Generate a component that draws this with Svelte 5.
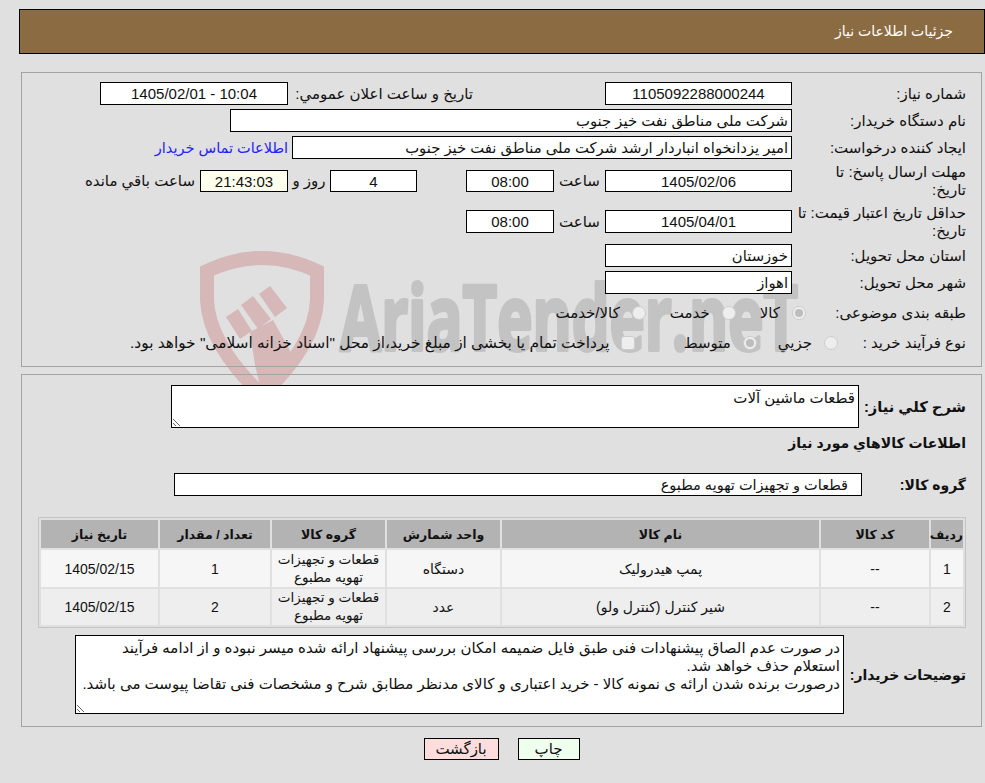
<script>
    const items = [
        { no: 1, code: '--', name: 'پمپ هیدرولیک', unit: 'دستگاه', qty: 1, date: '1405/02/15' },
        { no: 2, code: '--', name: 'شیر کنترل (کنترل ولو)', unit: 'عدد', qty: 2, date: '1405/02/15' }
    ];
    const group = 'قطعات و تجهیزات تهویه مطبوع';
    const notes = 'در صورت عدم الصاق پیشنهادات فنی طبق فایل ضمیمه امکان بررسی پیشنهاد ارائه شده میسر نبوده و از ادامه فرآیند استعلام حذف خواهد شد.\nدرصورت برنده شدن ارائه ی نمونه کالا - خرید اعتباری و کالای مدنظر مطابق شرح و مشخصات فنی تقاضا پیوست می باشد.';
</script>

<div class="page" dir="rtl">
    <svg class="watermark" width="985" height="420" viewBox="0 0 985 420" aria-hidden="true">
        <path class="shield" d="M207 271 Q262 245 317 271 L317 300 Q315 345 262 395 Q209 345 207 300 Z" />
        <polygon class="gavel" points="259,294 270,286 287,308 275,317" />
        <polygon class="gavel" points="241,305 253,296 271,319 258,329" />
        <polygon class="gavel" points="226,317 238,309 252,331 240,339" />
        <polygon class="gavel" points="250,332 273,320 298,365 262,395 255,365" />
        <text class="brand" x="340" y="350" textLength="458" lengthAdjust="spacingAndGlyphs">AriaTender.neT</text>
    </svg>

    <header class="title">جزئیات اطلاعات نیاز</header>

    <section class="panel first">
        <div class="row">
            <div class="label">شماره نیاز:</div>
            <input class="box w187" readonly value="1105092288000244" />
            <span class="pub-label">تاریخ و ساعت اعلان عمومي:</span>
            <input class="box w188" readonly value="10:04 - 1405/02/01" />
        </div>
        <div class="row">
            <div class="label">نام دستگاه خریدار:</div>
            <input class="box start w562" readonly value="شرکت ملی مناطق نفت خیز جنوب" />
        </div>
        <div class="row">
            <div class="label">ایجاد کننده درخواست:</div>
            <input class="box start w500" readonly value="امیر یزدانخواه انباردار ارشد شرکت ملی مناطق نفت خیز جنوب" />
            <span class="link">اطلاعات تماس خریدار</span>
        </div>
        <div class="row tall">
            <div class="label">مهلت ارسال پاسخ: تا<br />تاریخ:</div>
            <input class="box w187 short" readonly value="1405/02/06" />
            <span class="hour">ساعت</span>
            <input class="box w88 short" readonly value="08:00" />
            <input class="box w87 short days" readonly value="4" />
            <span class="day-text">روز و</span>
            <input class="box w88 short clock" readonly value="21:43:03" />
            <span class="left-text">ساعت باقي مانده</span>
        </div>
        <div class="row tall">
            <div class="label">حداقل تاریخ اعتبار قیمت: تا<br />تاریخ:</div>
            <input class="box w187" readonly value="1405/04/01" />
            <span class="hour">ساعت</span>
            <input class="box w88" readonly value="08:00" />
        </div>
        <div class="row">
            <div class="label">استان محل تحویل:</div>
            <input class="box start w187" readonly value="خوزستان" />
        </div>
        <div class="row">
            <div class="label">شهر محل تحویل:</div>
            <input class="box start w187" readonly value="اهواز" />
        </div>
        <div class="row choice">
            <div class="label short-label">طبقه بندی موضوعی:</div>
            <div class="options subject">
                <label><input type="radio" name="subject" disabled checked />کالا</label>
                <label><input type="radio" name="subject" disabled />خدمت</label>
                <label><input type="radio" name="subject" disabled />کالا/خدمت</label>
            </div>
        </div>
        <div class="row choice">
            <div class="label short-label">نوع فرآیند خرید :</div>
            <div class="options process">
                <label><input type="radio" name="process" disabled />جزیي</label>
                <label><input type="radio" name="process" disabled checked />متوسط</label>
                <label class="treasury"><input type="checkbox" disabled />پرداخت تمام یا بخشی از مبلغ خرید،از محل "اسناد خزانه اسلامی" خواهد بود.</label>
            </div>
        </div>
    </section>

    <section class="panel second">
        <div class="row desc">
            <div class="label bold">شرح کلي نیاز:</div>
            <textarea class="summary" readonly>قطعات ماشین آلات</textarea>
        </div>
        <h3>اطلاعات کالاهاي مورد نیاز</h3>
        <div class="row goods">
            <div class="label bold">گروه کالا:</div>
            <input class="box group" readonly value={group} />
        </div>

        <table>
            <thead>
                <tr>
                    <th class="c-no">ردیف</th>
                    <th class="c-code">کد کالا</th>
                    <th class="c-name">نام کالا</th>
                    <th class="c-unit">واحد شمارش</th>
                    <th class="c-group">گروه کالا</th>
                    <th class="c-qty">تعداد / مقدار</th>
                    <th class="c-date">تاریخ نیاز</th>
                </tr>
            </thead>
            <tbody>
                {#each items as item}
                    <tr>
                        <td>{item.no}</td>
                        <td>{item.code}</td>
                        <td>{item.name}</td>
                        <td>{item.unit}</td>
                        <td class="two-line">قطعات و تجهیزات<br />تهویه مطبوع</td>
                        <td>{item.qty}</td>
                        <td>{item.date}</td>
                    </tr>
                {/each}
            </tbody>
        </table>

        <div class="row buyer">
            <div class="label bold">توضیحات خریدار:</div>
            <textarea class="notes" readonly value={notes}></textarea>
        </div>
    </section>

    <div class="actions">
        <button class="back">بازگشت</button>
        <button class="print">چاپ</button>
    </div>
</div>

<style>
    :global(body) {
        background: #e0e0e0;
    }

    .page {
        position: relative;
        padding-top: 9px;
        height: 774px;
        overflow: hidden;
        font-family: "Liberation Sans", "DejaVu Sans", sans-serif;
        font-size: 15px;
        color: #111;
    }

    .watermark {
        position: absolute;
        top: 0;
        left: 0;
        z-index: -1;
        direction: ltr;
        pointer-events: none;
    }
    .shield {
        fill: none;
        stroke: #d6b8b9;
        stroke-width: 14;
    }
    .gavel {
        fill: #d6b8b9;
    }
    .brand {
        font-family: "Open Sans", sans-serif;
        font-weight: 700;
        font-size: 90px;
        fill: #c3c3c3;
        stroke: #c3c3c3;
        stroke-width: 4;
        stroke-linejoin: round;
    }

    .title {
        box-sizing: border-box;
        height: 45px;
        margin-left: 19px;
        padding-right: 31px;
        line-height: 43px;
        font-size: 14px;
        background: #8b6b41;
        border: 1px solid #000;
        color: #fff;
    }

    .panel {
        box-sizing: border-box;
        margin: 18px 3px 0 21px;
        padding: 9px 15px 0 0;
        border: 1px solid #a3a3a3;
        height: 295px;
    }
    .second {
        margin-top: 7px;
        padding-top: 10px;
        height: 353px;
    }

    .row {
        display: flex;
        align-items: center;
        min-height: 23px;
        margin-bottom: 4px;
    }
    .row.tall {
        height: 36px;
    }
    .row.tall + .row.tall {
        height: 37px;
    }
    .row.choice {
        height: 30px;
        margin-bottom: 0;
    }

    .label {
        flex: 0 0 174px;
        min-width: 0;
        line-height: 18px;
        white-space: nowrap;
    }
    .short-label {
        flex-basis: 128px;
    }
    .bold, h3 {
        font-weight: 700;
        font-size: 14px;
    }

    .box {
        box-sizing: border-box;
        height: 23px;
        padding: 0 3px;
        border: 1px solid #000;
        background: #fff;
        font: inherit;
        color: inherit;
        text-align: center;
        outline: none;
    }
    .box.start {
        text-align: right;
        font-size: 14.8px;
    }
    .box.short {
        height: 22px;
    }
    .w187 { width: 187px; }
    .w188 { width: 188px; }
    .w562 { width: 562px; }
    .w500 { width: 500px; }
    .w88 { width: 88px; }
    .w87 { width: 87px; }

    .pub-label {
        width: 185px;
        margin-right: 132px;
        white-space: nowrap;
    }
    .link {
        margin-right: 4px;
        font-size: 14.5px;
        color: #2222ff;
        white-space: nowrap;
    }
    .hour {
        width: 51px;
        text-align: center;
    }
    .days {
        margin-right: 49px;
    }
    .day-text {
        width: 42px;
        text-align: center;
    }
    .clock {
        background: #ffffee;
    }
    .left-text {
        margin-right: 5px;
        white-space: nowrap;
    }

    .options {
        display: flex;
        align-items: center;
        white-space: nowrap;
    }
    .options label {
        display: flex;
        align-items: center;
    }
    .options input {
        appearance: none;
        box-sizing: border-box;
        width: 14px;
        height: 14px;
        margin: 0 0 0 12px;
        border: 1px solid #cdcdcd;
        border-radius: 50%;
        background: #eee;
        display: grid;
        place-items: center;
    }
    .options input:checked::before {
        content: "";
        width: 8px;
        height: 8px;
        border-radius: 50%;
        background: #bdbdbd;
    }
    .options input[type="checkbox"] {
        border-radius: 3px;
    }
    .subject {
        gap: 24px;
        margin-right: 32px;
    }
    .process {
        gap: 21px;
    }
    .process .treasury {
        margin-right: 28px;
        font-size: 15.4px;
    }
    .process .treasury input {
        margin-left: 11px;
    }

    .desc {
        margin-bottom: 0;
    }
    .desc .label {
        flex-basis: 107px;
        font-size: 14.7px;
    }
    textarea {
        box-sizing: border-box;
        display: block;
        padding: 3px 3px;
        border: 1px solid #000;
        background: #fff;
        font: inherit;
        color: inherit;
        line-height: 18px;
        outline: none;
    }
    .summary {
        width: 688px;
        height: 43px;
    }
    h3 {
        margin: 6px 0 0;
        line-height: 18px;
    }
    .goods {
        margin: 21px 0 0;
    }
    .goods .label {
        flex-basis: 104px;
    }
    .group {
        width: 688px;
        text-align: right;
        padding-right: 13px;
        font-size: 14.5px;
    }

    table {
        box-sizing: border-box;
        width: 928px;
        margin-top: 21px;
        border: 1px solid #c4c4c4;
        border-spacing: 2px;
        table-layout: fixed;
        font-size: 14px;
    }
    th {
        height: 28px;
        padding: 0;
        background: #b3b3b3;
        font-weight: 700;
        font-size: 12.5px;
    }
    td {
        padding: 0 2px;
        text-align: center;
        line-height: 18px;
        background: #f6f6f6;
    }
    tbody tr {
        height: 37px;
    }
    tbody tr + tr {
        height: 36px;
    }
    tbody tr + tr td {
        background: #eee;
    }
    td.two-line {
        padding: 0;
        font-size: 13.5px;
        white-space: nowrap;
    }
    .c-no { width: 32px; }
    .c-code { width: 108px; }
    .c-name { width: 317px; }
    .c-unit { width: 113px; }
    .c-group { width: 113px; }
    .c-qty { width: 110px; }
    .c-date { width: 117px; }

    .buyer {
        margin: 7px 0 0;
    }
    .buyer .label {
        flex-basis: 122px;
    }
    .notes {
        width: 769px;
        height: 79px;
    }

    .actions {
        display: flex;
        justify-content: center;
        gap: 19px;
        margin-top: 11px;
        padding-left: 18px;
    }
    button {
        box-sizing: border-box;
        height: 22px;
        padding: 0;
        border: 1px solid #000;
        font: inherit;
        color: inherit;
    }
    .back {
        order: 2;
        width: 75px;
        background: #ffdddd;
    }
    .print {
        order: 1;
        width: 62px;
        background: #eeffee;
    }
</style>
